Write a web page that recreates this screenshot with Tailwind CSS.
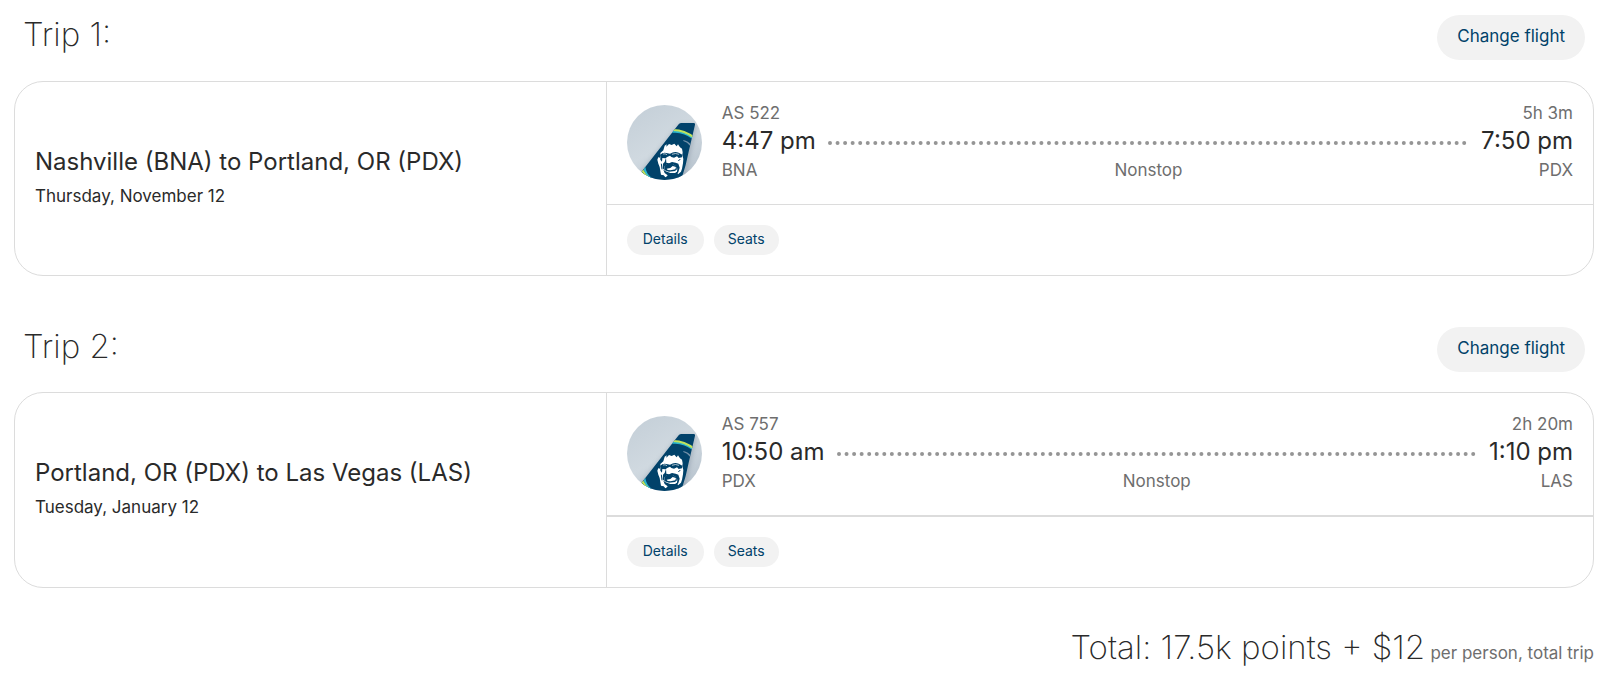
<!DOCTYPE html>
<html lang="en">
<head>
<meta charset="utf-8">
<meta name="viewport" content="width=device-width, initial-scale=1">
<title>Your trips</title>
<script src="https://cdn.jsdelivr.net/npm/@tailwindcss/browser@4"></script>
</head>
<body class="bg-white font-['Inter',sans-serif] text-[#2a2a2a]">
<svg class="block size-0" aria-hidden="true">
  <defs>
    <linearGradient id="sky" x1="0" y1="0" x2="0.6" y2="1">
      <stop offset="0" stop-color="#c3ced7"/>
      <stop offset="0.6" stop-color="#d0d9e0"/>
      <stop offset="1" stop-color="#bcc7d1"/>
    </linearGradient>
    <clipPath id="disc"><circle cx="193.5" cy="202.500" r="112.500"/></clipPath>
    <clipPath id="fin"><path d="M236 148Q239 144 245 144H281Q286 144 285 149L267 226L257 270L247 303L240 330H120V296Z"/></clipPath>
    <filter id="shade" x="-20%" y="-20%" width="140%" height="140%"><feGaussianBlur stdDeviation="7"/></filter>
    <symbol id="tail" viewBox="81 90 225 225">
      <g clip-path="url(#disc)">
        <rect x="81" y="90" width="225" height="225" fill="url(#sky)"/>
        <path d="M238 148L290 148L256 310L110 320L116 300Z" fill="#8b9aa8" opacity=".55" filter="url(#shade)"/>
        <g clip-path="url(#fin)">
          <rect x="110" y="140" width="180" height="180" fill="#01426a"/>
          <path d="M216 170Q250 166 281 190" fill="none" stroke="#2ab5cf" stroke-width="7"/>
          <path d="M218 165Q252 164 284 189" fill="none" stroke="#c1e35b" stroke-width="6"/>
          <path d="M250 195Q265 198 274 210L270 212Q262 202 250 198Z" fill="#7290a8"/>
          <path d="M133 276Q136 298 152 310" fill="none" stroke="#2ab5cf" stroke-width="6"/>
          <path d="M126 284Q134 302 150 314" fill="none" stroke="#c1e35b" stroke-width="7"/>
        </g>
        <path d="M190 226L194 212L200 208L199 215L207 207L215 210L223 206L230 214L234 208L240 217L246 221L248 232L247 240L250 252L249 265L246 281L243 290L234 298L231 290L227 297L216 298L204 295L202 303L196 307L191 301L183 299L181 288L179 276L175 266L172 254L175 246L178 249L182 242L181 234Z" fill="#fff"/>
        <path d="M181 239Q189 230 203 235L210 236Q223 228 236 233L247 239L246 247L236 249L231 244L222 248L214 246L210 242L203 245L196 250L187 249L186 260L181 254Z" fill="#01426a"/>
        <path d="M189 237Q196 235 201 239M216 238Q226 233 237 238" fill="none" stroke="#fff" stroke-width="2"/>
        <path d="M198 248L194 261L189 266L188 280L194 286L193 274L201 268L209 272L217 267L226 272L232 281L231 290L225 294L211 294L197 289L190 284L194 294L202 300L211 303L226 300L235 292L239 278L235 266L227 263L216 261L207 265L199 263Z" fill="#01426a"/>
        <path d="M193 272L201 267L217 266L229 274L231 283L225 288L207 290L194 286Z" fill="#01426a"/>
        <path d="M200 281L211 279L218 273L228 276L226 283L212 286L203 285Z" fill="#fff"/>
        <path d="M184 266L186 283M241 252L235 258" stroke="#01426a" stroke-width="3"/>
        <path d="M224 250L232 257L228 260L221 257Z" fill="#fff"/>
      </g>
    </symbol>
  </defs>
</svg>

<main class="px-[14px] pt-[15px] pr-[19px]">
  <section>
    <header class="flex items-start justify-between px-[9px] pb-[21px]">
      <h2 class="text-[33px] leading-[38px] font-extralight">Trip 1:</h2>
      <button type="button" class="h-[45px] rounded-full bg-[#f2f2f2] px-5 pb-[2px] text-[17px] text-[#01426a]">Change flight</button>
    </header>
    <article class="grid grid-cols-[3fr_5fr] rounded-[29px] border border-[#dcdcdc]">
      <div class="flex flex-col justify-center px-5 pb-[2px]">
        <h3 class="text-[24px] leading-9">Nashville (BNA) to Portland, OR (PDX)</h3>
        <p class="text-[17px] leading-8">Thursday, November 12</p>
      </div>
      <div class="-ml-px border-l border-[#dcdcdc]">
        <div class="flex gap-5 border-b border-[#dcdcdc] px-5 pt-[18px] pb-5">
          <svg class="mt-[5px] size-[75px] shrink-0" role="img" aria-label="Alaska Airlines"><use href="#tail"/></svg>
          <div class="grid grow grid-cols-[auto_1fr_auto] gap-x-3 text-[17px] text-[#6e6e6e]">
            <p class="leading-[26px]">AS 522</p><span></span><p class="text-right leading-[26px]">5h 3m</p>
            <p class="text-[24px] leading-[30px] text-[#2a2a2a]">4:47 pm</p>
            <svg class="mt-1 h-1 w-full self-center" aria-hidden="true"><line x1="2" y1="2" x2="100%" y2="2" stroke="#959595" stroke-width="4" stroke-linecap="round" stroke-dasharray="0 7.550"/></svg>
            <p class="text-right text-[24px] leading-[30px] text-[#2a2a2a]">7:50 pm</p>
            <p class="leading-[28px]">BNA</p><p class="text-center leading-[28px]">Nonstop</p><p class="text-right leading-[28px]">PDX</p>
          </div>
        </div>
        <div class="flex gap-[10px] p-5">
          <button type="button" class="h-[30px] rounded-full bg-[#f2f2f2] px-4 pb-1 text-[14px] text-[#01426a]">Details</button>
          <button type="button" class="h-[30px] rounded-full bg-[#f2f2f2] px-[14px] pb-1 text-[14px] text-[#01426a]">Seats</button>
        </div>
      </div>
    </article>
  </section>

  <section class="mt-[51px]">
    <header class="flex items-start justify-between px-[9px] pb-5">
      <h2 class="text-[33px] leading-[38px] font-extralight">Trip 2:</h2>
      <button type="button" class="h-[45px] rounded-full bg-[#f2f2f2] px-5 pb-[2px] text-[17px] text-[#01426a]">Change flight</button>
    </header>
    <article class="grid grid-cols-[3fr_5fr] rounded-[29px] border border-[#dcdcdc]">
      <div class="flex flex-col justify-center px-5 pb-[2px]">
        <h3 class="text-[24px] leading-9">Portland, OR (PDX) to Las Vegas (LAS)</h3>
        <p class="text-[17px] leading-8">Tuesday, January 12</p>
      </div>
      <div class="-ml-px border-l border-[#dcdcdc]">
        <div class="flex gap-5 border-b-2 border-[#dcdcdc] px-5 pt-[18px] pb-5">
          <svg class="mt-[5px] size-[75px] shrink-0" role="img" aria-label="Alaska Airlines"><use href="#tail"/></svg>
          <div class="grid grow grid-cols-[auto_1fr_auto] gap-x-3 text-[17px] text-[#6e6e6e]">
            <p class="leading-[26px]">AS 757</p><span></span><p class="text-right leading-[26px]">2h 20m</p>
            <p class="text-[24px] leading-[30px] text-[#2a2a2a]">10:50 am</p>
            <svg class="mt-1 h-1 w-full self-center" aria-hidden="true"><line x1="2" y1="2" x2="100%" y2="2" stroke="#959595" stroke-width="4" stroke-linecap="round" stroke-dasharray="0 7.550"/></svg>
            <p class="text-right text-[24px] leading-[30px] text-[#2a2a2a]">1:10 pm</p>
            <p class="leading-[28px]">PDX</p><p class="text-center leading-[28px]">Nonstop</p><p class="text-right leading-[28px]">LAS</p>
          </div>
        </div>
        <div class="flex gap-[10px] p-5">
          <button type="button" class="h-[30px] rounded-full bg-[#f2f2f2] px-4 pb-1 text-[14px] text-[#01426a]">Details</button>
          <button type="button" class="h-[30px] rounded-full bg-[#f2f2f2] px-[14px] pb-1 text-[14px] text-[#01426a]">Seats</button>
        </div>
      </div>
    </article>
  </section>

  <p class="mt-10 text-right text-[33px] leading-[38px] font-extralight">Total: 17.5k points + $12 <span class="-ml-1 text-[17px] font-normal text-[#6e6e6e]">per person, total trip</span></p>
</main>
</body>
</html>
